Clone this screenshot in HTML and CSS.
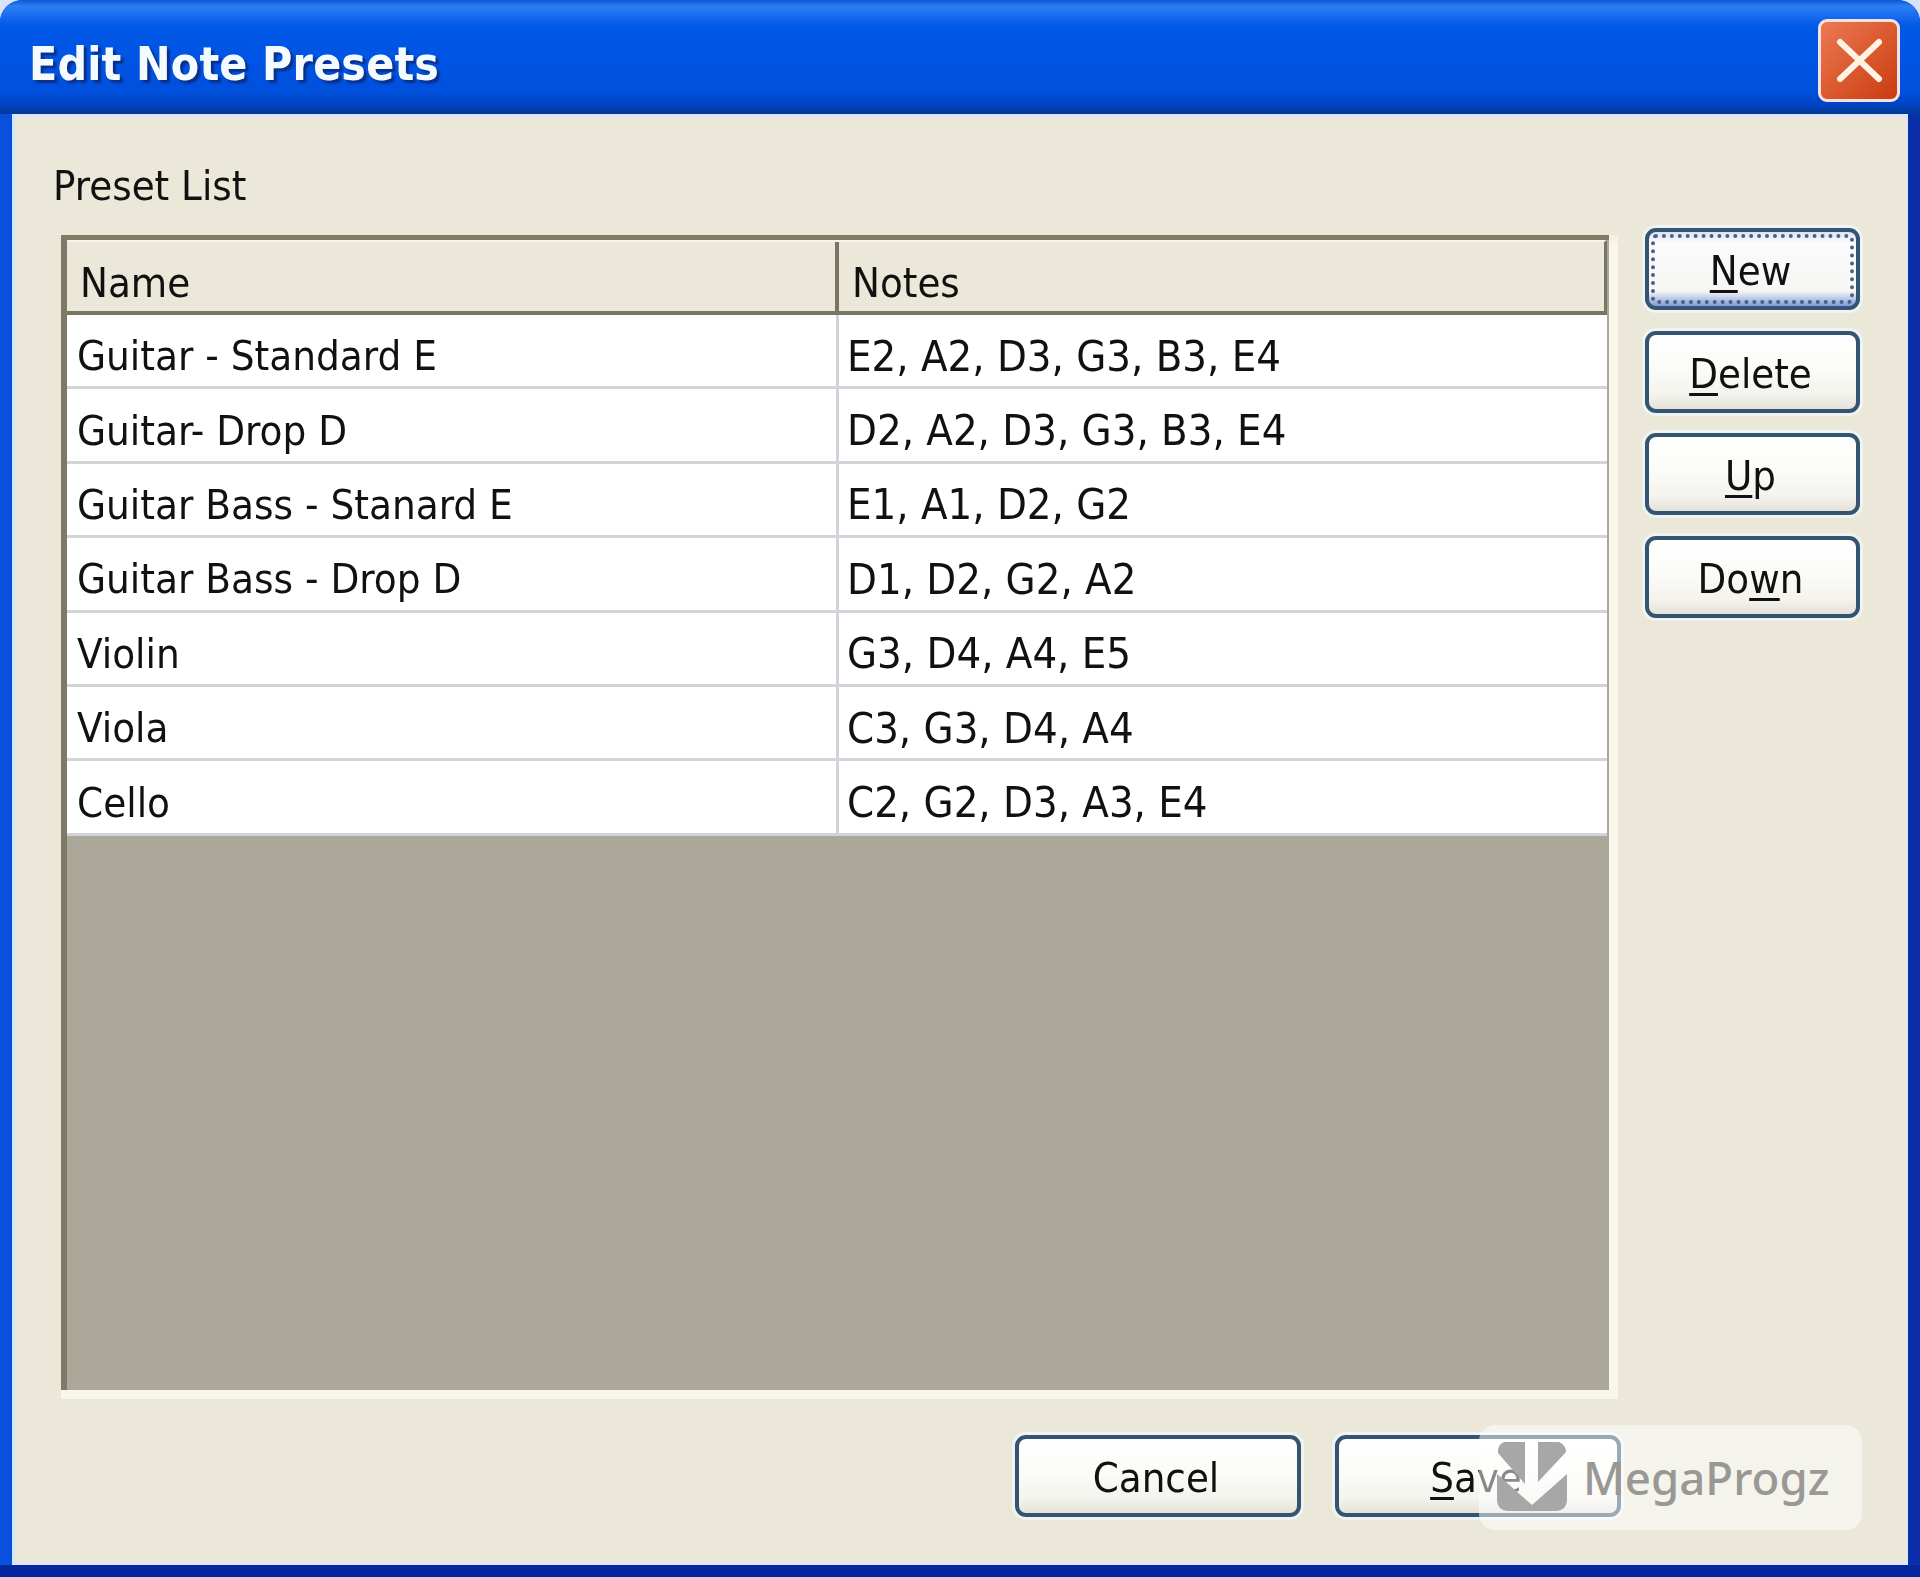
FILE: index.html
```html
<!DOCTYPE html>
<html lang="en">
<head>
<meta charset="utf-8">
<title>Edit Note Presets</title>
<link rel="stylesheet" href="styles.css">
</head>
<body>
<div class="window">
  <header class="titlebar">
    <h1 class="title">Edit Note Presets</h1>
    <button class="close" aria-label="Close">
      <svg viewBox="0 0 82 83" width="82" height="83"><path d="M22 23 L61 60 M61 23 L22 60" class="close-x"/></svg>
    </button>
  </header>
  <main class="client">
    <div class="label">Preset List</div>
    <div class="content">
      <section class="well">
        <div class="list-head">
          <div class="head-cell head-name">Name</div>
          <div class="head-cell">Notes</div>
        </div>
        <div class="row"><div class="cell cell-name">Guitar - Standard E</div><div class="cell cell-notes">E2, A2, D3, G3, B3, E4</div></div>
        <div class="row"><div class="cell cell-name">Guitar- Drop D</div><div class="cell cell-notes">D2, A2, D3, G3, B3, E4</div></div>
        <div class="row"><div class="cell cell-name">Guitar Bass - Stanard E</div><div class="cell cell-notes">E1, A1, D2, G2</div></div>
        <div class="row"><div class="cell cell-name">Guitar Bass - Drop D</div><div class="cell cell-notes">D1, D2, G2, A2</div></div>
        <div class="row"><div class="cell cell-name">Violin</div><div class="cell cell-notes">G3, D4, A4, E5</div></div>
        <div class="row"><div class="cell cell-name">Viola</div><div class="cell cell-notes">C3, G3, D4, A4</div></div>
        <div class="row"><div class="cell cell-name">Cello</div><div class="cell cell-notes">C2, G2, D3, A3, E4</div></div>
      </section>
      <aside class="side">
        <button class="btn btn-side btn-default"><u>N</u>ew</button>
        <button class="btn btn-side"><u>D</u>elete</button>
        <button class="btn btn-side"><u>U</u>p</button>
        <button class="btn btn-side">Do<u>w</u>n</button>
      </aside>
    </div>
    <footer class="footer">
      <button class="btn btn-foot">Cancel</button>
      <button class="btn btn-foot"><u>S</u>ave</button>
    </footer>
  </main>
</div>
<div class="watermark">
  <svg class="wm-logo" viewBox="0 0 70 70" width="70" height="70">
    <path d="M7 0 H28 V42 L1 11 Q0 3 7 0 Z"/>
    <path d="M41 0 H62 Q69 3 69 10 L41 40 Z"/>
    <path d="M0 32 L35 63 L70 32 V57 Q70 69 58 69 H12 Q0 69 0 57 Z"/>
  </svg>
  <span class="wm-text">MegaProgz</span>
</div>
</body>
</html>
```
FILE: styles.css
```css
* { box-sizing: border-box; }
html, body { margin: 0; padding: 0; }
body {
  width: 1920px;
  height: 1577px;
  background: #d8e4f6;
  overflow: hidden;
  position: relative;
}
.window {
  width: 1920px;
  height: 1577px;
  display: flex;
  flex-direction: column;
  border-radius: 22px 22px 0 0;
  border-bottom: 12px solid #0626a0;
  background: linear-gradient(90deg, #0a50dc 0, #0b4fd8 60%, #0a2fa8 100%);
  font-family: "DejaVu Sans", "Liberation Sans", sans-serif;
  font-stretch: condensed;
  color: #111;
  filter: blur(0.7px);
  overflow: hidden;
}
.titlebar {
  height: 114px;
  flex: none;
  display: flex;
  align-items: flex-start;
  justify-content: space-between;
  padding: 19px 20px 0 29px;
  border-radius: 22px 22px 0 0;
  background: linear-gradient(180deg, #0b56d8 0, #2b7ff2 6px, #1f72f0 13px, #0058e6 26px, #0054e3 60px, #0050dc 92px, #0044c4 104px, #003a9c 113px);
}
.title {
  margin: 18px 0 0;
  font-family: inherit;
  font-stretch: condensed;
  font-weight: 700;
  font-size: 46px;
  letter-spacing: 0.15px;
  line-height: 54px;
  color: #f4fbff;
  text-shadow: 3px 3px 2px #0a2f8a;
}
.close {
  width: 82px;
  height: 83px;
  padding: 0;
  border: 3px solid #f3e2e0;
  border-radius: 9px;
  background: linear-gradient(135deg, #ea7a54 0, #dc5a30 50%, #c93c12 100%);
  display: flex;
  align-items: center;
  justify-content: center;
}
.close svg { display: block; flex: none; }
.close-x { stroke: #fff3e6; stroke-width: 6; stroke-linecap: round; fill: none; }
.client {
  flex: 1;
  margin: 0 12px;
  background: #ebe8d9;
  border-top: 4px solid #dfe7f3;
  border-left: 3px solid #cfe8fb;
  border-right: 2px solid #dfe7f3;
  border-bottom: 3px solid #e2e6f4;
  padding: 43px 0 0 38px;
  display: flex;
  flex-direction: column;
}
.label {
  font-size: 41.5px;
  line-height: 50px;
  height: 50px;
  margin-bottom: 24px;
}
.content {
  display: flex;
  align-items: flex-start;
  gap: 36px;
  padding-left: 8px;
}
.well {
  width: 1548px;
  height: 1155px;
  flex: none;
  background: #aca899;
  border-style: solid;
  border-width: 5px 0 0 6px;
  border-color: #7f7a66;
  box-shadow: 9px 9px 0 #f9f6ea, 0 9px 0 #f9f6ea, 9px 0 0 #f5f2e4;
}
.list-head {
  display: grid;
  grid-template-columns: 772px 1fr;
  height: 75px;
  margin-right: 2px;
  background: #ebe8d9;
  border-bottom: 4px solid #7a7562;
  border-top: 2px solid #f6f4ea;
  border-right: 3px solid #7a7562;
}
.head-cell {
  font-size: 41.5px;
  padding: 12px 0 0 13px;
  display: flex;
  align-items: center;
}
.head-name { border-right: 4px solid #7a7562; }
.row {
  display: grid;
  grid-template-columns: 772px 1fr;
  height: 74.4px;
  margin-right: 2px;
  background: #fff;
  border-bottom: 3px solid #d3d3da;
}
.cell {
  padding: 10px 0 0 10px;
  white-space: nowrap;
  display: flex;
  align-items: center;
}
.cell-name { font-size: 41.7px; border-right: 3px solid #d3d3da; }
.cell-notes { font-size: 43.2px; padding-left: 8px; }
.side {
  display: flex;
  flex-direction: column;
  gap: 20.5px;
  margin-top: -7px;
}
.btn {
  font-family: inherit;
  font-stretch: condensed;
  font-size: 41.5px;
  color: #111;
  height: 82px;
  padding: 3px 4px 0 0;
  border: 4px solid #34546f;
  border-radius: 11px;
  background: linear-gradient(180deg, #fff 0, #fbfbf8 45%, #f4f3ee 80%, #e4e2d8 100%);
  box-shadow: 0 0 0 3px #eef3f4;
}
.btn u { text-decoration-thickness: 3px; text-underline-offset: 5px; }
.btn-side { width: 215px; }
.btn-default {
  background: linear-gradient(180deg, #dbe4f4 0, #fbfbfd 14%, #f6f6f4 80%, #7f9bdc 100%);
  outline: 4px dotted #4a6088;
  outline-offset: -10px;
}
.footer {
  display: flex;
  gap: 34px;
  width: 1569px;
  justify-content: flex-end;
  padding-right: 1px;
  margin-top: 45px;
}
.btn-foot { width: 286px; }
.watermark {
  position: absolute;
  left: 1479px;
  top: 1425px;
  width: 383px;
  height: 105px;
  display: flex;
  align-items: center;
  gap: 16px;
  padding-left: 18px;
  border-radius: 16px;
  background: rgba(255, 255, 255, 0.5);
}
.wm-logo { flex: none; display: block; fill: #a8a7a8; margin-top: -1px; }
.wm-text {
  font-family: "Noto Sans", "Open Sans", sans-serif;
  font-size: 45.6px;
  font-weight: 500;
  line-height: 50px;
  margin-top: -2px;
  color: #999894;
}
```
